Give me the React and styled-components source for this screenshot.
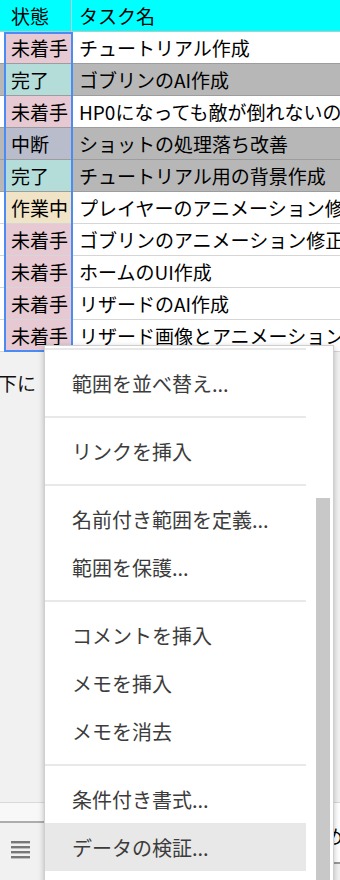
import React from 'react'
import styled, { createGlobalStyle } from 'styled-components'

const GlobalStyle = createGlobalStyle`
  html, body { margin: 0; padding: 0; }
  body {
    background: #f1f1f1;
    font-family: "Noto Sans CJK JP", "Noto Sans", sans-serif;
  }
`

const STATUS_COLORS = {
  未着手: '#e6c9d2',
  完了: '#b4dcd8',
  中断: '#b9bdcb',
  作業中: '#f1e3c5',
}

// 完了 / 中断 rows get greyed out by conditional formatting
const tasks = [
  { status: '未着手', name: 'チュートリアル作成' },
  { status: '完了', name: 'ゴブリンのAI作成' },
  { status: '未着手', name: 'HP0になっても敵が倒れないのを修正' },
  { status: '中断', name: 'ショットの処理落ち改善' },
  { status: '完了', name: 'チュートリアル用の背景作成' },
  { status: '作業中', name: 'プレイヤーのアニメーション修正' },
  { status: '未着手', name: 'ゴブリンのアニメーション修正' },
  { status: '未着手', name: 'ホームのUI作成' },
  { status: '未着手', name: 'リザードのAI作成' },
  { status: '未着手', name: 'リザード画像とアニメーション作成' },
]

const isGrey = (t) => t && (t.status === '完了' || t.status === '中断')

const menu = [
  ['sep'],
  ['範囲を並べ替え...'],
  ['sep'],
  ['リンクを挿入'],
  ['sep'],
  ['名前付き範囲を定義...'],
  ['範囲を保護...'],
  ['sep'],
  ['コメントを挿入'],
  ['メモを挿入'],
  ['メモを消去'],
  ['sep'],
  ['条件付き書式...'],
  ['データの検証...', true],
]

const Page = styled.div`
  position: relative;
  width: 340px;
  height: 880px;
  overflow: hidden;
  display: flex;
  flex-direction: column;
`

const Sheet = styled.div`
  position: relative;
  flex: none;
`

const Row = styled.div`
  display: grid;
  grid-template-columns: 6px 66px 1fr;
  height: 32px;
  box-sizing: border-box;
  background: ${(p) => p.$bg};
  border-bottom: 1px solid ${(p) => p.$line};
  font-size: 19px;
  line-height: 31px;
  color: #000;
  white-space: nowrap;
`

const Stub = styled.div``

const StatusCell = styled.div`
  background: ${(p) => p.$bg || 'transparent'};
  border-right: 1px solid #c8c8c8;
  padding-left: 5px;
  overflow: hidden;
`

const TaskCell = styled.div`
  padding-left: 7px;
  overflow: hidden;
`

const Selection = styled.div`
  position: absolute;
  left: 4px;
  top: 32px;
  width: 69px;
  height: 320px;
  box-sizing: border-box;
  border: 2px solid #4b8bf4;
  pointer-events: none;
`

const Note = styled.div`
  flex: 1;
  padding-top: 20px;
  font-size: 19px;
  line-height: 22px;
  color: #111;
  margin-left: -2px;
`

const Footer = styled.div`
  flex: none;
  height: 77px;
  display: flex;
  border-top: 1px solid #d9d9d9;
`

const FooterLeft = styled.div`
  flex: 1;
  display: flex;
  flex-direction: column;
`

const Strip = styled.div`
  height: 18px;
  background: #f8f8f8;
  border-bottom: 2px solid #adadad;
`

const Bar = styled.div`
  flex: 1;
  background: #f1f1f1;
  padding: 17px 0 0 11px;
`

const Tab = styled.div`
  width: 36px;
  height: 61px;
  box-sizing: border-box;
  background: #fff;
  border-bottom: 2px solid #9a9a9a;
  padding: 22px 0 0 1px;
  font-size: 19px;
  line-height: 22px;
  white-space: nowrap;
  overflow: hidden;
`

const Menu = styled.div`
  position: absolute;
  left: 44px;
  top: 345px;
  bottom: -10px;
  width: 290px;
  box-sizing: border-box;
  background: #fff;
  border: 1px solid #cfcfcf;
  box-shadow: 0 2px 6px rgba(0, 0, 0, 0.25);
  display: flex;
`

const MenuList = styled.div`
  width: 261px;
  padding-top: 2px;
`

const MenuItem = styled.div`
  height: 48px;
  display: flex;
  align-items: center;
  padding-left: 27px;
  font-size: 20px;
  color: #3c3c3c;
  background: ${(p) => (p.$active ? '#e8e8e8' : 'transparent')};
  white-space: nowrap;
`

const Separator = styled.div`
  height: 2px;
  background: #e8e8e8;
  margin: ${(p) => (p.$first ? '0 0 9px' : '9px 0')};
`

const Track = styled.div`
  flex: 1;
  display: flex;
  padding: 152px 3px 0 10px;
`

const Thumb = styled.div`
  flex: 1;
  background: #c8c8c8;
`

const SheetsIcon = () => (
  <svg width="19" height="18" viewBox="0 0 19 18">
    {[1, 6, 11, 16].map((y) => (
      <rect key={y} x="0" y={y - 1} width="19" height="2.4" fill="#777" />
    ))}
  </svg>
)

export default function App() {
  return (
    <Page>
      <GlobalStyle />
      <Sheet>
        <Row $bg="#00ffff" $line="#c4c4c4">
          <Stub />
          <StatusCell>状態</StatusCell>
          <TaskCell>タスク名</TaskCell>
        </Row>
        {tasks.map((t, i) => {
          const grey = isGrey(t)
          const dark = grey || isGrey(tasks[i + 1])
          return (
            <Row key={i} $bg={grey ? '#b7b7b7' : '#fff'} $line={dark ? '#9d9d9d' : '#d6d6d6'}>
              <Stub />
              <StatusCell $bg={STATUS_COLORS[t.status]}>{t.status}</StatusCell>
              <TaskCell>{t.name}</TaskCell>
            </Row>
          )
        })}
        <Selection />
      </Sheet>
      <Note>下に</Note>
      <Footer>
        <FooterLeft>
          <Strip />
          <Bar>
            <SheetsIcon />
          </Bar>
        </FooterLeft>
        <Tab>始めに</Tab>
      </Footer>
      <Menu>
        <MenuList>
          {menu.map(([label, active], i) =>
            label === 'sep' ? (
              <Separator key={i} $first={i === 0} />
            ) : (
              <MenuItem key={i} $active={active}>{label}</MenuItem>
            )
          )}
        </MenuList>
        <Track>
          <Thumb />
        </Track>
      </Menu>
    </Page>
  )
}
